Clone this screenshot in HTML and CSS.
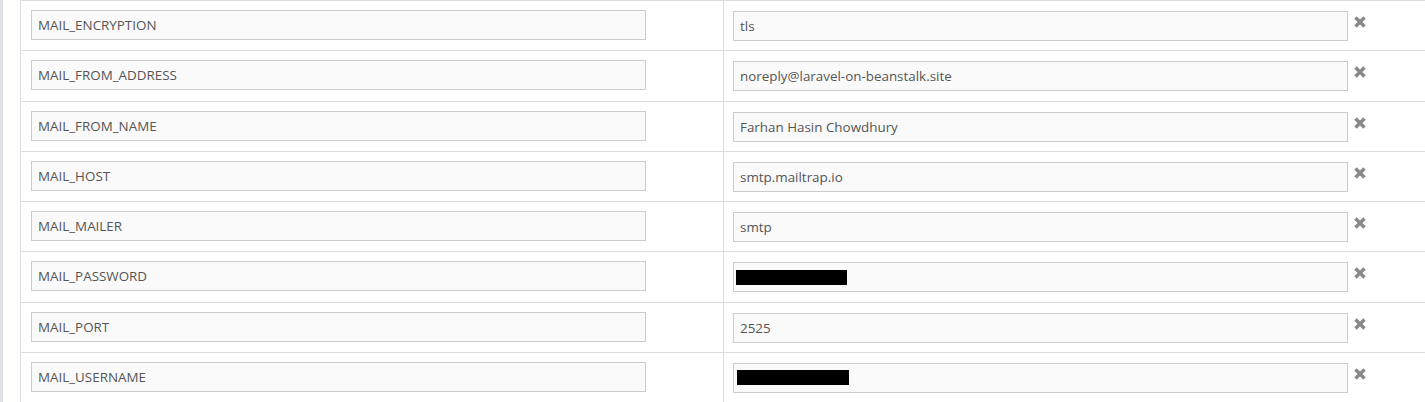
FILE: index.html
```html
<!DOCTYPE html>
<html>
<head>
<meta charset="utf-8">
<link rel="stylesheet" href="styles.css">
</head>
<body>
<div class="page">
  <div class="rail"></div>
  <div class="table">
    <div class="row">
      <div class="cell key"><div class="field">MAIL_ENCRYPTION</div></div>
      <div class="cell val"><div class="field">tls</div><span class="remove"><svg viewBox="0 0 14 14" width="14" height="14"><path d="M2.5 2.5L11.5 11.5M11.5 2.5L2.5 11.5"/></svg></span></div>
    </div>
    <div class="row">
      <div class="cell key"><div class="field">MAIL_FROM_ADDRESS</div></div>
      <div class="cell val"><div class="field">noreply@laravel-on-beanstalk.site</div><span class="remove"><svg viewBox="0 0 14 14" width="14" height="14"><path d="M2.5 2.5L11.5 11.5M11.5 2.5L2.5 11.5"/></svg></span></div>
    </div>
    <div class="row">
      <div class="cell key"><div class="field">MAIL_FROM_NAME</div></div>
      <div class="cell val"><div class="field">Farhan Hasin Chowdhury</div><span class="remove"><svg viewBox="0 0 14 14" width="14" height="14"><path d="M2.5 2.5L11.5 11.5M11.5 2.5L2.5 11.5"/></svg></span></div>
    </div>
    <div class="row">
      <div class="cell key"><div class="field">MAIL_HOST</div></div>
      <div class="cell val"><div class="field">smtp.mailtrap.io</div><span class="remove"><svg viewBox="0 0 14 14" width="14" height="14"><path d="M2.5 2.5L11.5 11.5M11.5 2.5L2.5 11.5"/></svg></span></div>
    </div>
    <div class="row">
      <div class="cell key"><div class="field">MAIL_MAILER</div></div>
      <div class="cell val"><div class="field">smtp</div><span class="remove"><svg viewBox="0 0 14 14" width="14" height="14"><path d="M2.5 2.5L11.5 11.5M11.5 2.5L2.5 11.5"/></svg></span></div>
    </div>
    <div class="row">
      <div class="cell key"><div class="field">MAIL_PASSWORD</div></div>
      <div class="cell val"><div class="field redacted"><span class="blackout b1"></span></div><span class="remove"><svg viewBox="0 0 14 14" width="14" height="14"><path d="M2.5 2.5L11.5 11.5M11.5 2.5L2.5 11.5"/></svg></span></div>
    </div>
    <div class="row">
      <div class="cell key"><div class="field">MAIL_PORT</div></div>
      <div class="cell val"><div class="field">2525</div><span class="remove"><svg viewBox="0 0 14 14" width="14" height="14"><path d="M2.5 2.5L11.5 11.5M11.5 2.5L2.5 11.5"/></svg></span></div>
    </div>
    <div class="row">
      <div class="cell key"><div class="field">MAIL_USERNAME</div></div>
      <div class="cell val"><div class="field redacted"><span class="blackout b2"></span></div><span class="remove"><svg viewBox="0 0 14 14" width="14" height="14"><path d="M2.5 2.5L11.5 11.5M11.5 2.5L2.5 11.5"/></svg></span></div>
    </div>
  </div>
</div>
</body>
</html>
```
FILE: styles.css
```css
html, body {
  margin: 0;
  padding: 0;
  background: #ffffff;
}
body {
  font-family: "Open Sans", "DejaVu Sans", sans-serif;
  font-size: 13.4px;
  color: #555555;
}
.page {
  display: flex;
  height: 402px;
  overflow: hidden;
}
.rail {
  width: 3px;
  background: #dfe3e5;
  flex: none;
}
.table {
  margin-left: 17px;
  flex: 1;
  border-left: 1px solid #dddddd;
}
.row {
  display: grid;
  grid-template-columns: 702px 1fr;
  border-top: 1px solid #dddddd;
  height: 49.3px;
}
.cell {
  display: flex;
  align-items: flex-start;
  padding: 9px 0 0 10px;
}
.val {
  border-left: 1px solid #dddddd;
  padding-left: 9px;
}
.field {
  box-sizing: border-box;
  width: 615px;
  height: 30px;
  border: 1px solid #cccccc;
  background: #fafafa;
  padding: 0 6px;
  line-height: 28px;
  white-space: nowrap;
  overflow: hidden;
  flex: none;
}
.val .field {
  margin-top: 1px;
}
.redacted {
  position: relative;
}
.blackout {
  position: absolute;
  background: #000000;
  height: 15px;
}
.b1 {
  left: 2px;
  top: 7px;
  width: 111px;
}
.b2 {
  left: 3px;
  top: 6px;
  width: 112px;
}
.remove {
  display: block;
  margin-left: 5px;
  margin-top: 5px;
  width: 14px;
  height: 14px;
}
.remove svg {
  display: block;
  stroke: #888888;
  stroke-width: 3.4;
  stroke-linecap: butt;
  fill: none;
}
```
